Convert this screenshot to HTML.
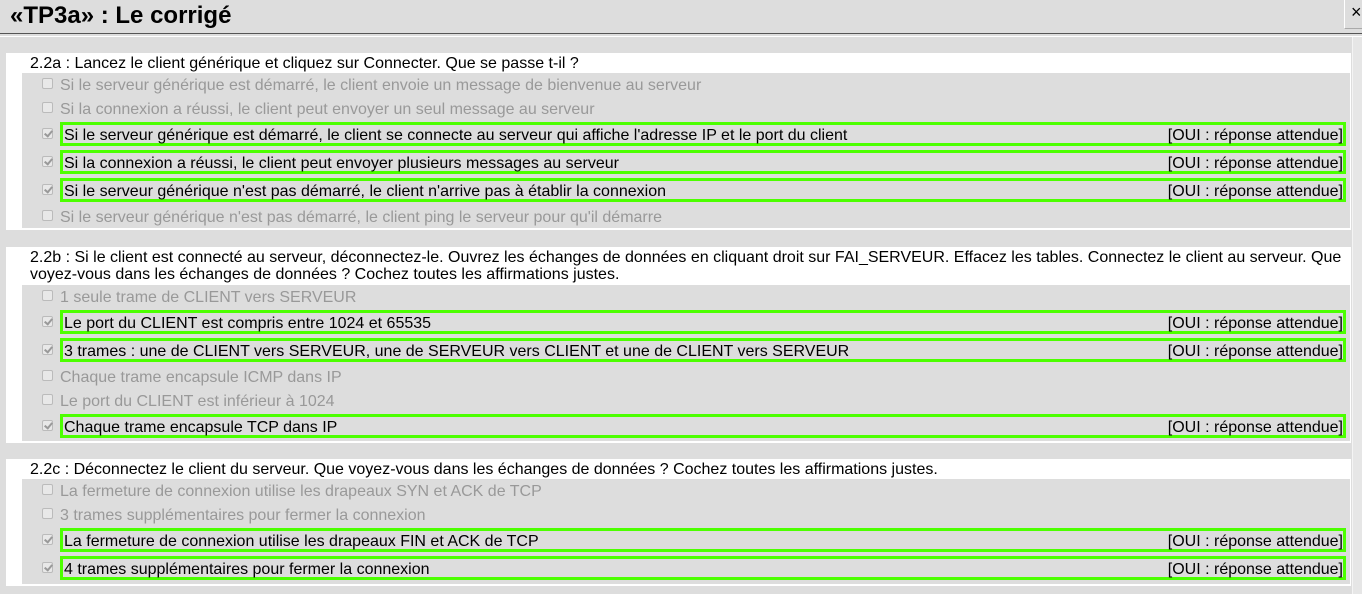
<!DOCTYPE html>
<html><head><meta charset="utf-8"><style>
*{margin:0;padding:0;box-sizing:border-box}
body{width:1362px;height:594px;background:#dddddd;position:relative;overflow:hidden;font-family:"Liberation Sans",sans-serif;font-size:16px;color:#000}
.hdr{position:absolute;left:0;top:0;width:1362px;height:34px;border-bottom:1px solid #555;background:#ddd}
.hdr h1{position:absolute;left:10px;top:1px;font-size:24px;font-weight:bold;line-height:30px}
.x{position:absolute;left:1344px;top:-1px;width:20px;height:30px;border-left:1px solid #fff;border-bottom:1px solid #aaa;font-size:18px;padding-left:6px;padding-top:3px}
.line2{position:absolute;left:0;top:36px;width:1362px;height:1px;background:#fff}
.sb{position:absolute;left:1352px;top:37px;width:10px;height:557px;background:#e6e6e6;border-left:1px solid #f4f4f4}
.panel{position:absolute;left:6px;width:1345px;background:#fff}
.gray{position:absolute;background:#ddd}
.q{position:absolute;left:24px;line-height:17px}
.row{position:absolute;left:0;height:24px;line-height:27px;width:100%}
.cb{position:absolute;left:42px;top:6px;width:11px;height:11px;border:1px solid #bbb;border-radius:2px;background:#e8e8e8}
.cb.c::after{content:"";position:absolute;left:3px;top:0px;width:3px;height:6px;border:solid #999;border-width:0 2px 2px 0;transform:rotate(40deg)}
.t{position:absolute;left:60px;color:#999}
.g{position:absolute;left:60px;top:0;width:1286px;height:24px;border:3px solid #4cff00;line-height:21px;padding-left:1px}
.g span{float:right}
</style></head><body>
<div class="hdr"><h1>«TP3a» : Le corrigé</h1><div class="x">×</div></div>
<div class="line2"></div>
<div class="sb"></div>

<div class="panel" style="top:53px;height:177px"></div>
<div class="gray" style="left:22px;width:1328px;top:73px;height:155px"></div>
<div class="q" style="top:55px;left:30px">2.2a : Lancez le client générique et cliquez sur Connecter. Que se passe t-il ?</div>
<div class="row" style="top:72px"><div class="cb"></div><div class="t">Si le serveur générique est démarré, le client envoie un message de bienvenue au serveur</div></div>
<div class="row" style="top:96px"><div class="cb"></div><div class="t">Si la connexion a réussi, le client peut envoyer un seul message au serveur</div></div>
<div class="row" style="top:122px"><div class="cb c"></div><div class="g">Si le serveur générique est démarré, le client se connecte au serveur qui affiche l'adresse IP et le port du client<span>[OUI : réponse attendue]</span></div></div>
<div class="row" style="top:150px"><div class="cb c"></div><div class="g">Si la connexion a réussi, le client peut envoyer plusieurs messages au serveur<span>[OUI : réponse attendue]</span></div></div>
<div class="row" style="top:178px"><div class="cb c"></div><div class="g">Si le serveur générique n'est pas démarré, le client n'arrive pas à établir la connexion<span>[OUI : réponse attendue]</span></div></div>
<div class="row" style="top:204px"><div class="cb"></div><div class="t">Si le serveur générique n'est pas démarré, le client ping le serveur pour qu'il démarre</div></div>

<div class="panel" style="top:247px;height:196px"></div>
<div class="gray" style="left:22px;width:1328px;top:285px;height:156px"></div>
<div class="q" style="top:249px;left:30px;width:1320px">2.2b : Si le client est connecté au serveur, déconnectez-le. Ouvrez les échanges de données en cliquant droit sur FAI_SERVEUR. Effacez les tables. Connectez le client au serveur. Que voyez-vous dans les échanges de données ? Cochez toutes les affirmations justes.</div>
<div class="row" style="top:284px"><div class="cb"></div><div class="t">1 seule trame de CLIENT vers SERVEUR</div></div>
<div class="row" style="top:310px"><div class="cb c"></div><div class="g">Le port du CLIENT est compris entre 1024 et 65535<span>[OUI : réponse attendue]</span></div></div>
<div class="row" style="top:338px"><div class="cb c"></div><div class="g">3 trames : une de CLIENT vers SERVEUR, une de SERVEUR vers CLIENT et une de CLIENT vers SERVEUR<span>[OUI : réponse attendue]</span></div></div>
<div class="row" style="top:364px"><div class="cb"></div><div class="t">Chaque trame encapsule ICMP dans IP</div></div>
<div class="row" style="top:388px"><div class="cb"></div><div class="t">Le port du CLIENT est inférieur à 1024</div></div>
<div class="row" style="top:414px"><div class="cb c"></div><div class="g">Chaque trame encapsule TCP dans IP<span>[OUI : réponse attendue]</span></div></div>

<div class="panel" style="top:459px;height:127px"></div>
<div class="gray" style="left:22px;width:1328px;top:479px;height:105px"></div>
<div class="q" style="top:461px;left:30px">2.2c : Déconnectez le client du serveur. Que voyez-vous dans les échanges de données ? Cochez toutes les affirmations justes.</div>
<div class="row" style="top:478px"><div class="cb"></div><div class="t">La fermeture de connexion utilise les drapeaux SYN et ACK de TCP</div></div>
<div class="row" style="top:502px"><div class="cb"></div><div class="t">3 trames supplémentaires pour fermer la connexion</div></div>
<div class="row" style="top:528px"><div class="cb c"></div><div class="g">La fermeture de connexion utilise les drapeaux FIN et ACK de TCP<span>[OUI : réponse attendue]</span></div></div>
<div class="row" style="top:556px"><div class="cb c"></div><div class="g">4 trames supplémentaires pour fermer la connexion<span>[OUI : réponse attendue]</span></div></div>
</body></html>
